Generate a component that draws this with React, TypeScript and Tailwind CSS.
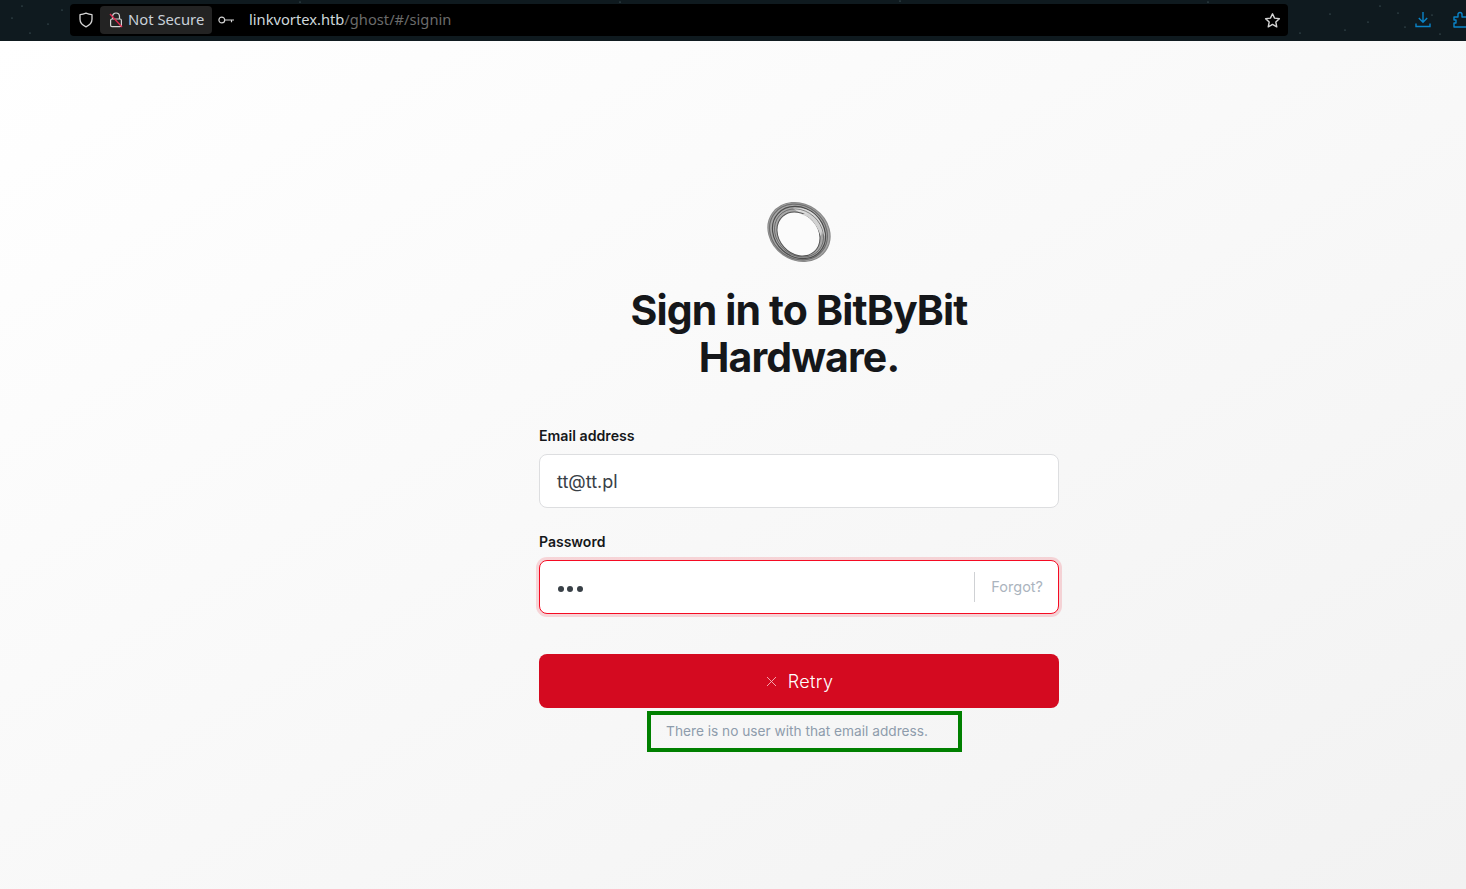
import React from 'react'

const Stars: React.FC = () => (
  <svg className="absolute inset-0 w-full h-full" aria-hidden="true">
    {[[22,6],[48,24],[62,10],[30,33],[12,18],[1330,14],[1345,30],[1368,22],[1398,13],[1432,15],[1405,27],[1300,33],[1440,34],[1380,6],[300,2],[620,2],[900,1],[1208,2]].map(([x,y],i)=>(
      <circle key={i} cx={x} cy={y} r="0.6" fill="#5f7a80" />
    ))}
  </svg>
)

const Logo: React.FC = () => (
  <svg width="68" height="64" viewBox="0 0 66 62" fill="none">
    <ellipse cx="33" cy="30" rx="31.5" ry="27" transform="rotate(35 33 30)" fill="#a8a8a8" stroke="#8a8a8a" strokeWidth="1.2" />
    <ellipse cx="32.5" cy="30" rx="29.5" ry="25.5" transform="rotate(38 32.5 30)" stroke="#6e6e6e" strokeWidth="1.2" />
    <ellipse cx="33" cy="30.5" rx="27.5" ry="23.5" transform="rotate(42 33 30.5)" stroke="#4c4c4c" strokeWidth="1.1" />
    <path d="M27 7c7-1 14 0 20 5 6 5 10 12 11 22-3-3-5-7-6-10-2-5-5-8-9-10-5-1-11-3-16-7z" fill="#dcdcdc" />
    <ellipse cx="32.5" cy="32" rx="23" ry="19" transform="rotate(48 32.5 32)" fill="#fbfbfb" stroke="#555" strokeWidth="1" />
    <path d="M35 13c5 1 8 3 11 6 3 4 6 8 8 15 2-3 1-10-2-15-3-5-8-8-17-6z" fill="#d2d2d2" />
    <ellipse cx="33" cy="31" rx="25.5" ry="21.5" transform="rotate(42 33 31)" stroke="#3a3a3a" strokeWidth="0.7" opacity="0.7" />
  </svg>
)

const App: React.FC = () => {
  return (
    <div className="w-full h-[889px] flex flex-col overflow-hidden font-['Inter',sans-serif]">
      <div className="relative h-[41px] shrink-0 bg-[#0f1a1f] pt-[4px]">
        <Stars />
        <div className="relative ml-[70px] w-[1218px] h-[32px] bg-black rounded flex items-center font-['Noto_Sans',sans-serif]">
          <svg className="ml-[8px]" width="16" height="16" viewBox="0 0 16 16" fill="none" stroke="#d4d4d4" strokeWidth="1.3">
            <path d="M8 1.2c2 .9 4 1.4 6 1.5v4.6c0 3.4-2.5 6-6 7.5-3.5-1.5-6-4.1-6-7.5V2.7c2-.1 4-.6 6-1.5z" strokeLinejoin="round" />
          </svg>
          <div className="ml-[6px] h-[28px] w-[112px] bg-[#232323] rounded flex items-center pl-[9px] gap-[5px]">
            <svg width="14" height="16" viewBox="0 0 14 16" fill="none">
              <path d="M3.5 7V4.5a3.5 3.5 0 0 1 7 0V7" stroke="#d4d4d4" strokeWidth="1.2" />
              <rect x="1.6" y="7" width="10.8" height="7.6" rx="1.4" stroke="#d4d4d4" strokeWidth="1.2" />
              <path d="M1 2l12 13" stroke="#e22850" strokeWidth="1.3" />
            </svg>
            <span className="pb-[2px] text-[14.8px] leading-none text-[#c9d1d9]">Not Secure</span>
          </div>
          <svg className="ml-[6px]" width="16" height="10" viewBox="0 0 16 10" fill="none" stroke="#d4d4d4" strokeWidth="1.2">
            <circle cx="3.8" cy="5" r="2.9" />
            <path d="M6.8 5H16M13.5 5v2.2" />
          </svg>
          <span className="ml-[15px] pb-[2px] text-[14.7px] leading-none text-[#cfd8dc]">
            linkvortex.htb<span className="text-[#6b6b6b]">/ghost/#/signin</span>
          </span>
          <svg className="ml-auto mr-[7px]" width="17" height="17" viewBox="0 0 24 24" fill="none" stroke="#d4d4d4" strokeWidth="2" strokeLinejoin="round">
            <path d="M12 2.5l2.9 6.2 6.8.8-5 4.7 1.3 6.8-6-3.4-6 3.4 1.3-6.8-5-4.7 6.8-.8z" />
          </svg>
        </div>
        <svg className="absolute left-[1415px] top-[11px]" width="16" height="17" viewBox="0 0 16 17" fill="none" stroke="#0a84c8" strokeWidth="1.4">
          <path d="M8 1v10M3.8 7l4.2 4.2L12.2 7M1 12.5V15.5h14v-3" />
        </svg>
        <svg className="absolute left-[1453px] top-[11px]" width="16" height="17" viewBox="0 0 16 17" fill="none" stroke="#0a84c8" strokeWidth="1.4" strokeLinejoin="round">
          <path d="M1 6h4V3.5a2 2 0 0 1 4 0V6h5v4h2v4h-2v2H1v-4h2V9H1z" />
        </svg>
      </div>

      <main className="relative flex-1 bg-gradient-to-br from-white to-[#f2f2f2] flex flex-col items-center pl-[132px]">
        <div className="mt-[160px] h-[62px]">
          <Logo />
        </div>
        <h1 className="mt-[24px] w-[520px] text-center text-[41px] leading-[46.5px] font-bold tracking-[-0.87px] text-[#15171a]">
          Sign in to BitByBit
          <br />
          Hardware.
        </h1>

        <form className="mt-[46px] w-[520px] flex flex-col">
          <label className="text-[14.2px] leading-[20px] font-semibold text-[#15171a]">Email address</label>
          <div className="mt-[8px] h-[54px] bg-white border border-[#dddee0] rounded-lg flex items-center pl-[17px] text-[18px] text-[#394047]">
            tt@tt.pl
          </div>
          <label className="mt-[24px] text-sm leading-[20px] font-semibold text-[#15171a]">Password</label>
          <div className="mt-[8px] h-[54px] bg-white border border-[#f50b23] rounded-lg shadow-[0_0_0_3px_rgba(240,37,55,0.17)] flex items-center pl-[18px] pr-[15px]">
            <div className="flex gap-[3.3px] mt-[4px]">
              <span className="w-[6px] h-[6px] rounded-full bg-[#394047]" />
              <span className="w-[6px] h-[6px] rounded-full bg-[#394047]" />
              <span className="w-[6px] h-[6px] rounded-full bg-[#394047]" />
            </div>
            <div className="ml-auto h-[30px] border-l border-[#cfd1d4] flex items-center pl-4 text-[14.5px] text-[#abb4be]">
              Forgot?
            </div>
          </div>
          <button type="button" className="mt-[40px] h-[54px] pl-[1px] bg-[#d40a20] rounded-lg flex items-center justify-center gap-[11px] text-white text-[18px] tracking-[0.02em] font-light">
            <svg width="11" height="11" viewBox="0 0 11 11" fill="none" stroke="#f5b5bc" strokeWidth="0.9">
              <path d="M1 1l9 9M10 1l-9 9" />
            </svg>
            Retry
          </button>
          <p className="mt-[14px] pr-[4px] text-center text-[13.7px] leading-[18px] text-[#8e9cac]">There is no user with that email address.</p>
        </form>

        <div className="absolute left-[647px] top-[670px] w-[315px] h-[41px] border-[4px] border-[#008000]" />
      </main>
    </div>
  )
}

export default App
